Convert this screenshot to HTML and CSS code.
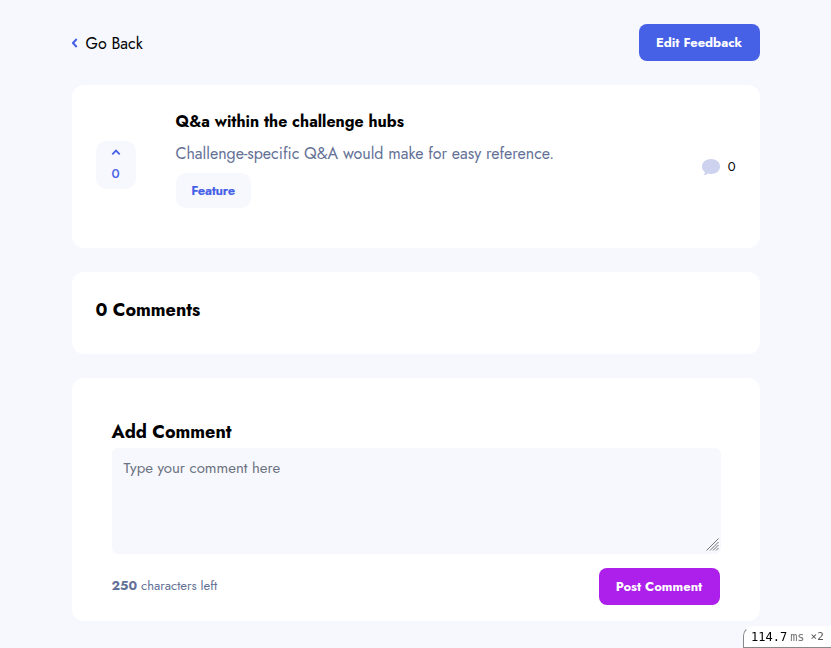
FILE: index.html
```
<!DOCTYPE html>
<html lang="en">
<head>
<meta charset="utf-8">
<title>Feedback</title>
<link rel="stylesheet" href="styles.css">
</head>
<body>
<main class="page">
  <header class="top">
    <a class="back"><svg width="6" height="10" viewBox="0 0 6 10"><path d="M4.7 1 1 5 4.7 9" fill="none" stroke="#4661e6" stroke-width="2"/></svg><span class="back-label">Go Back</span></a>
    <button class="btn edit"><span>Edit Feedback</span></button>
  </header>
  <section class="card feedback">
    <button class="vote"><svg width="10" height="7" viewBox="0 0 10 7"><path d="M1.3 5.3 5 1.6 8.7 5.3" fill="none" stroke="#4661e6" stroke-width="1.8"/></svg><span>0</span></button>
    <div class="info">
      <h1>Q&amp;a within the challenge hubs</h1>
      <p>Challenge-specific Q&amp;A would make for easy reference.</p>
      <span class="tag">Feature</span>
    </div>
    <div class="count"><svg width="18" height="16" viewBox="0 0 18 16"><path d="M2.62 16H1.35l.9-.9c.48-.48.79-1.11.87-1.79C1.07 11.97 0 9.8 0 7.53 0 3.75 3.29 0 9.03 0 15.1 0 18 3.73 18 7.51c0 3.8-2.93 7.5-8.98 7.5-1.05 0-2.15-.15-3.11-.4C5.09 15.46 3.88 16 2.62 16z" fill="#cdd2ee"/></svg><span>0</span></div>
  </section>
  <section class="card comments"><h2>0 Comments</h2></section>
  <section class="card add">
    <h2>Add Comment</h2>
    <div class="field">
      <textarea placeholder="Type your comment here"></textarea>
      <svg class="grip" width="13" height="13" viewBox="0 0 13 13"><path d="M.5 12.5l12-12M4 12.5l8.5-8.5M7 12.5l5.5-5.5M10 12.5l2.5-2.5" fill="none" stroke="#73757c" stroke-width="1"/></svg>
    </div>
    <div class="actions">
      <p class="left"><b>250</b> <span>characters left</span></p>
      <button class="btn post"><span>Post Comment</span></button>
    </div>
  </section>
</main>
<aside class="profiler"><span class="time">114.7</span><span class="unit">ms</span><span class="times">×2</span></aside>
</body>
</html>
```
FILE: styles.css
```
* { box-sizing: border-box; }
body { margin: 0; background: #f7f8fd; color: #000; font-family: Jost, Lato, sans-serif; font-size: 16px; }
h1, h2, p { margin: 0; }
button { border: 0; font-family: inherit; }
svg { display: block; flex: none; }
.page { width: 688px; height: 648px; margin: 0 auto; padding-top: 24px; display: flex; flex-direction: column; gap: 24px; }
.top { height: 37px; display: flex; justify-content: space-between; align-items: center; }
.back { display: flex; align-items: center; gap: 8px; font-size: 16px; line-height: 24px; }
.back-label { padding-top: 2px; }
.btn { width: 121px; height: 37px; padding: 0; border-radius: 8px; color: #fff; font-size: 13px; line-height: 19px; font-weight: 700; white-space: nowrap; }
.edit { background: #4661e6; }
.post { background: #ad1fea; }
.card { background: #fff; border-radius: 12px; }
.feedback { height: 163px; padding: 24px; display: flex; align-items: flex-start; }
.vote { width: 40px; height: 48px; margin: 32px 40px 0 0; padding: 8px 0 0; border-radius: 10px; background: #f7f8fd; color: #4661e6; font-size: 13px; line-height: 19px; font-weight: 500; display: flex; flex-direction: column; align-items: center; justify-content: flex-start; gap: 8px; }
.info { flex: 1; white-space: nowrap; }
.info h1 { font-size: 16px; line-height: 25px; font-weight: 700; margin-bottom: 7px; }
.info p { font-size: 16px; line-height: 25px; color: #647196; margin-bottom: 7px; }
.tag { display: flex; align-items: center; justify-content: center; width: 75px; height: 35px; border-radius: 10px; background: #f7f8fd; color: #4661e6; font-size: 13px; line-height: 19px; font-weight: 700; letter-spacing: -0.25px; }
.count { display: flex; align-items: center; gap: 8px; margin-top: 48px; font-size: 13px; line-height: 20px; }
.comments { height: 82px; padding: 24px; }
h2 { font-size: 18px; line-height: 28px; font-weight: 700; }
.add { height: 243px; padding: 40px 39px 16px 40px; }
.field { position: relative; margin-top: 2px; }
textarea { display: block; width: 609px; height: 106px; padding: 8px 12px; border: 0; border-radius: 6px; background: #f7f8fd; font: 15px/24px Jost, Lato, sans-serif; resize: none; }
textarea::placeholder { color: #6b7280; opacity: 1; }
.grip { position: absolute; right: 2px; bottom: 3px; }
.actions { display: flex; justify-content: space-between; align-items: center; margin: 14px 1px 0 0; }
.left { font-size: 13px; line-height: 19px; color: #647196; padding-bottom: 2px; }
.left b { font-weight: 700; }
.profiler { position: fixed; right: 0; bottom: 0; width: 88px; height: 22px; padding-left: 7px; border: solid #888; border-width: 1px 0 1px 1px; border-top-color: transparent; border-top-left-radius: 10px; background: #fff; display: flex; align-items: center; font: 12px/20px "DejaVu Sans Mono", monospace; white-space: nowrap; }
.unit { margin-left: 3px; color: #777; }
.times { margin-left: 6px; color: #555; font-size: 11px; }
```
